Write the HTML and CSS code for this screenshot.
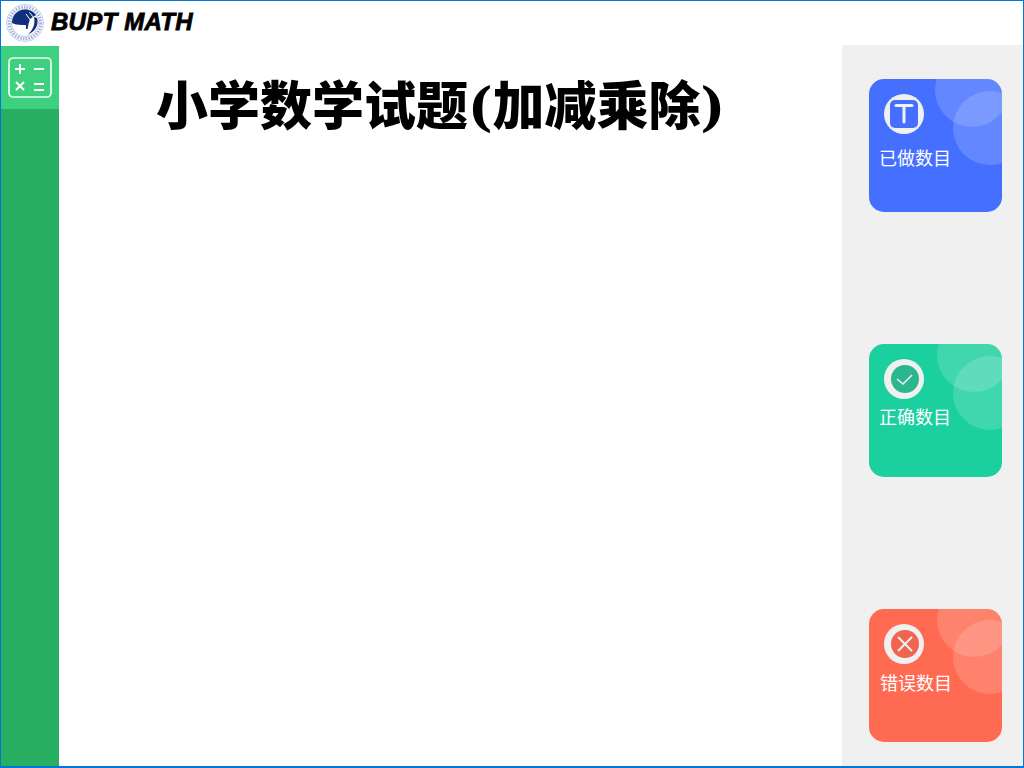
FILE: index.html
```html
<!DOCTYPE html>
<html lang="zh-CN">
<head>
    <meta charset="UTF-8">
    <meta name="viewport" content="width=device-width, initial-scale=1.0">
    <link rel="stylesheet" href="styles.css">
    <title>小学数学试题</title>
</head>
<body>
    <div class="app">
        <header class="topbar">
            <svg class="logo" viewBox="0 0 38 38">
                <circle cx="19" cy="19" r="18.4" fill="#fff" stroke="#b4c1e0" stroke-width="0.8"/>
                <circle cx="19" cy="19" r="15.8" fill="none" stroke="#a3b4da" stroke-width="3.2" stroke-dasharray="1.6 1.2"/>
                <circle cx="19" cy="19" r="13.6" fill="#fff" stroke="#8fa3d2" stroke-width="0.6"/>
                <path d="M6 19 C6 11 12 5.5 19 5.5 C24 5.5 28 8 30 11 L24 15 L22.5 20 L21.5 25 L20 25 L20 21 C15 21 10 21 6 19 Z" fill="#10307f"/>
                <path d="M28 13 L31 14 C33 21 29 28 22 30.5 C27 26 29.500 20 28 13 Z" fill="#10307f"/>
                <path d="M20 10 L25 17 M23.500 8.500 L28 14" stroke="#fff" stroke-width="1"/>
            </svg>
            <span class="brand">BUPT MATH</span>
        </header>
        <div class="main">
            <nav class="sidebar">
                <div class="nav-item">
                    <svg class="calc-icon" viewBox="0 0 44 41" fill="none" stroke="#fff">
                        <rect x="1" y="1" width="42" height="39" rx="4" stroke-width="1.7" opacity="0.9"/>
                        <path d="M7 12 H17 M12 7 V17 M26 12 H36 M8 25 L16 33 M16 25 L8 33 M26 27 H36 M26 33 H36" stroke-width="2"/>
                    </svg>
                </div>
            </nav>
            <main class="content">
                <h1 class="title">小学数学试题(加减乘除)</h1>
            </main>
            <aside class="stats">
                <div class="card card-done">
                    <div class="badge">
                        <svg viewBox="0 0 40 40">
                            <rect x="6" y="6" width="28" height="28" rx="5" fill="#4570ff"/>
                            <path d="M12 11.5 H28 M20 11.5 V28" fill="none" stroke="#f0f0f0" stroke-width="3" stroke-linecap="round"/>
                        </svg>
                    </div>
                    <div class="card-label">已做数目</div>
                </div>
                <div class="card card-right">
                    <div class="badge">
                        <svg viewBox="0 0 40 40">
                            <circle cx="21" cy="20" r="14" fill="#2bb78e"/>
                            <path d="M13 20 L19 25 L28 16" fill="none" stroke="#f0f0f0" stroke-width="1.6"/>
                        </svg>
                    </div>
                    <div class="card-label">正确数目</div>
                </div>
                <div class="card card-wrong">
                    <div class="badge">
                        <svg viewBox="0 0 40 40">
                            <circle cx="21" cy="20" r="14" fill="#f0654f"/>
                            <path d="M14 13 L28 27 M28 13 L14 27" fill="none" stroke="#f0f0f0" stroke-width="2"/>
                        </svg>
                    </div>
                    <div class="card-label">错误数目</div>
                </div>
            </aside>
        </div>
    </div>
</body>
</html>
```

FILE: styles.css
```css
html, body {
    margin: 0;
    padding: 0;
}

.app {
    width: 1024px;
    height: 768px;
    box-sizing: border-box;
    border: 1px solid #0078d7;
    border-bottom-width: 2px;
    display: flex;
    flex-direction: column;
    background-color: #fff;
    overflow: hidden;
}

.topbar {
    height: 44px;
    display: flex;
    align-items: center;
    padding-left: 5px;
    flex-shrink: 0;
}

.logo {
    width: 38px;
    height: 38px;
}

.brand {
    margin: 0 0 3px 7px;
    font-family: "Liberation Sans", sans-serif;
    font-size: 24px;
    font-weight: bold;
    font-style: italic;
    letter-spacing: 0.25px;
    color: #000;
    -webkit-text-stroke: 0.8px #000;
}

.main {
    flex: 1;
    display: flex;
    min-height: 0;
}

.sidebar {
    width: 58px;
    margin-top: 1px;
    background-color: #27ae60;
}

.nav-item {
    height: 63px;
    background-color: #3dd17f;
    display: flex;
    justify-content: center;
    padding-top: 11px;
    box-sizing: border-box;
}

.calc-icon {
    width: 44px;
    height: 41px;
}

.content {
    flex: 1;
}

.title {
    margin: 30px 0 0 97px;
    font-family: "DejaVu Serif", "Noto Sans CJK SC", serif;
    font-size: 52px;
    font-weight: 900;
    line-height: 64px;
    color: #000;
    white-space: nowrap;
}

.stats {
    width: 181px;
    background-color: #f0f0f0;
    padding: 34px 0 0 27px;
    box-sizing: border-box;
    display: flex;
    flex-direction: column;
    gap: 132px;
}

.card {
    position: relative;
    width: 133px;
    height: 133px;
    border-radius: 15px;
    overflow: hidden;
    box-sizing: border-box;
    padding: 15px 0 0 10px;
    color: #fff;
}

.card::before,
.card::after {
    content: "";
    position: absolute;
    width: 74px;
    height: 74px;
    border-radius: 50%;
    background-color: rgba(255, 255, 255, 0.16);
}

.card::before {
    left: 66px;
    top: -26px;
}

.card::after {
    left: 84px;
    top: 12px;
}

.card-right::before,
.card-wrong::before {
    left: 68px;
}

.card-wrong::after {
    top: 11px;
}

.card-done {
    background-color: #4570ff;
}

.card-right {
    background-color: #1ccf9f;
}

.card-wrong {
    background-color: #ff6a52;
}

.badge {
    width: 40px;
    height: 40px;
    margin-left: 5px;
    border-radius: 50%;
    background-color: #f0f0f0;
}

.badge svg {
    display: block;
    width: 40px;
    height: 40px;
}

.card-label {
    font-family: "Noto Sans CJK SC", sans-serif;
    font-size: 18px;
    line-height: 26px;
    margin-top: 10px;
}

.card-right .card-label {
    margin-top: 4px;
}

.card-wrong .card-label {
    margin: 5px 0 0 1px;
}
```
